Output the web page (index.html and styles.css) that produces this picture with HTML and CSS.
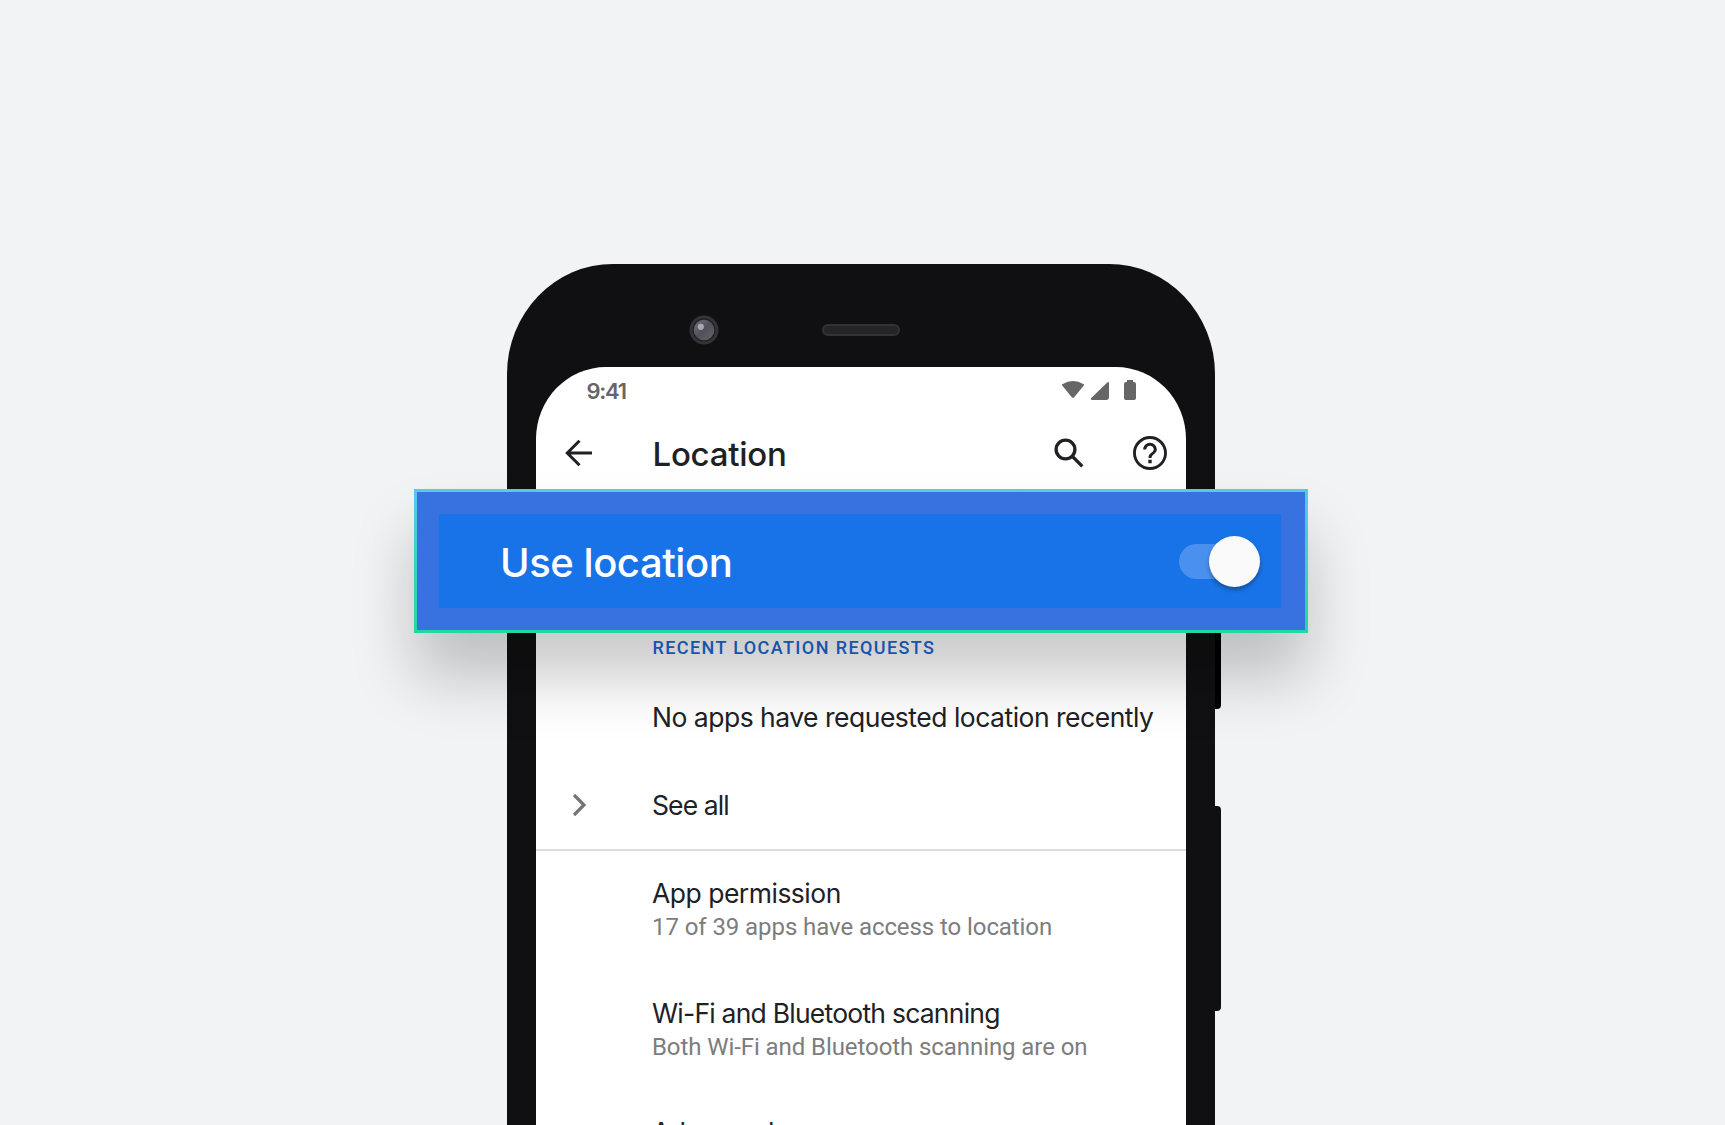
FILE: index.html
```html
<!DOCTYPE html>
<html lang="en">
<head>
<meta charset="utf-8">
<title>Location</title>
<link rel="stylesheet" href="styles.css">
</head>
<body>
<main class="stage">
  <section class="phone">
    <span class="side-button side-button-power"></span>
    <span class="side-button side-button-volume"></span>
    <div class="bezel">
      <svg class="camera" width="30" height="30" viewBox="0 0 30 30">
        <defs><linearGradient id="lens" x1="0" y1="0" x2="1" y2="1"><stop offset="0" stop-color="#77757d"/><stop offset=".5" stop-color="#50505c"/><stop offset="1" stop-color="#66656b"/></linearGradient></defs>
        <circle cx="15" cy="15" r="14.5" fill="#343437"/>
        <circle cx="15" cy="15" r="11.5" fill="#202024"/>
        <circle cx="15" cy="15" r="10.3" fill="url(#lens)"/>
        <circle cx="11.8" cy="11.8" r="3.1" fill="#aaa9af"/>
      </svg>
      <span class="speaker"></span>
    </div>
    <div class="screen">
      <div class="status-bar">
        <span class="clock">9:41</span>
        <svg class="status-icons" width="76" height="22" viewBox="0 0 76 22" fill="#666">
          <path d="M1.3 4.2Q12 -2.2 22.7 4.2Q23.4 4.8 22.8 5.6L13.2 17.2Q12 18.5 10.8 17.2L1.2 5.6Q.6 4.8 1.3 4.2Z"/>
          <path d="M48 2.8V17Q48 20 45 20H31Q29 19.500 30.500 17.800L46.500 2.300Q47.800 1.300 48 2.800Z"/>
          <path d="M66 0H72V2H73Q75 2 75 4V18Q75 20 73 20H65Q63 20 63 18V4Q63 2 65 2H66Z"/>
        </svg>
      </div>
      <header class="app-bar">
        <svg class="back" width="28" height="28" viewBox="0 0 28 28" fill="none" stroke="#202124" stroke-width="3"><path d="M27 14H3M14.500 1.800L2.300 14L14.500 26.200"/></svg>
        <h1 class="title">Location</h1>
        <svg class="search" width="32" height="32" viewBox="0 0 32 32" fill="none" stroke="#202124" stroke-width="3.300"><circle cx="12.500" cy="12.500" r="9.400"/><path d="M19 19L29.300 29.300"/></svg>
        <svg class="help" width="34" height="34" viewBox="2 2 20 20" fill="#202124"><path d="M11 18h2v-2h-2v2zm1-16C6.480 2 2 6.480 2 12s4.480 10 10 10 10-4.480 10-10S17.520 2 12 2zm0 18.300c-4.580 0-8.300-3.720-8.300-8.300s3.720-8.300 8.300-8.300 8.300 3.720 8.300 8.300-3.720 8.300-8.300 8.300zm0-14.300c-2.210 0-4 1.790-4 4h1.800c0-1.210.99-2.200 2.200-2.200s2.200.99 2.200 2.200c0 2-3.100 1.750-3.100 5h1.800c0-2.250 3.100-2.500 3.100-5 0-2.210-1.790-4-4-4z"/></svg>
      </header>
      <div class="content">
        <h2 class="section-label">RECENT LOCATION REQUESTS</h2>
        <p class="row row-empty"><span class="row-title t-empty">No apps have requested location recently</span></p>
        <div class="row row-all">
          <svg class="chevron" width="16" height="24" viewBox="0 0 16 24" fill="none" stroke="#757575" stroke-width="3.200"><path d="M2 2L12 12L2 22"/></svg>
          <span class="row-title t-all">See all</span>
        </div>
        <div class="row row-double"><span class="row-title t-app">App permission</span><span class="row-sub">17 of 39 apps have access to location</span></div>
        <div class="row row-double"><span class="row-title t-wifi">Wi-Fi and Bluetooth scanning</span><span class="row-sub">Both Wi-Fi and Bluetooth scanning are on</span></div>
        <div class="row row-double row-last"><span class="row-title t-adv">Advanced</span></div>
      </div>
    </div>
    <div class="callout">
      <div class="callout-inner">
        <span class="callout-label">Use location</span>
        <span class="switch"><span class="thumb"></span></span>
      </div>
    </div>
  </section>
</main>
</body>
</html>
```
FILE: styles.css
```css
* { box-sizing: border-box; }
body { margin: 0; background: #f1f3f5; font-family: Inter, "Liberation Sans", sans-serif; color: #202124; }
h1, h2, p { margin: 0; }
svg { display: block; flex: none; }
.stage { height: 1125px; overflow: hidden; padding: 264px 0 0 507px; }
.phone { position: relative; width: 707.500px; height: 1300px; padding: 0 28.500px 0 29px; background: #101012; border-radius: 106px / 110px; }
.side-button { position: absolute; left: 100%; width: 6.500px; background: #101012; border-radius: 0 4px 4px 0; }
.side-button-power { top: 300px; height: 144.500px; background: #000; }
.side-button-volume { top: 542px; height: 204.500px; }
.bezel { height: 103px; display: flex; align-items: center; padding: 29px 0 0 152.700px; gap: 103.500px; }
.speaker { width: 78px; height: 12px; border-radius: 6px; background: #252527; border: 2px solid #333335; }
.screen { height: 1150px; background: #fff; border-radius: 70px 70px 0 0 / 72px 72px 0 0; overflow: hidden; }
.status-bar { height: 49px; display: flex; justify-content: space-between; align-items: center; padding: 0 49px 0 50.500px; color: #666; }
.clock { margin-top: -1px; font-size: 22px; font-weight: 600; letter-spacing: -1.300px; }
.status-icons { margin-top: -2px; }
.app-bar { height: 74px; display: flex; align-items: center; padding: 0 19px 0 29px; }
.title { flex: 1; margin: 1px 0 0 59.500px; font-size: 33px; line-height: 40px; font-weight: 500; letter-spacing: -.250px; }
.search { margin-top: -1px; }
.help { margin-left: 48.500px; }
.content { padding-top: 147px; }
.section-label { margin-left: 116.500px; font: 500 18px/22px Roboto, sans-serif; letter-spacing: 1.400px; color: #1967d2; white-space: nowrap; }
.row { display: flex; padding-left: 116px; white-space: nowrap; }
.row-title { font-size: 26.500px; line-height: 34px; }
.t-empty, .t-app { letter-spacing: -.500px; }
.t-all { letter-spacing: -.900px; }
.t-wifi { letter-spacing: -.770px; }
.t-adv { letter-spacing: -.600px; }
.row-empty { padding-top: 41px; height: 102.500px; }
.row-all { align-items: center; height: 89px; padding: 0 0 0 35.500px; border-bottom: 2px solid #dadcdc; }
.chevron { margin-right: 64.500px; }
.row-double { flex-direction: column; height: 120px; padding-top: 25.500px; }
.row-last { padding-top: 24.500px; }
.row-sub { font: 24px/34px Roboto, sans-serif; letter-spacing: -.080px; color: #7d7d7d; }
.callout { position: absolute; left: -93px; top: 225px; width: 894px; height: 144px; padding: 22px 24px; border: 3px solid; border-image: linear-gradient(#58c8ec, #20d9a0) 1; background: #3871e0; box-shadow: 0 44px 62px 0 rgba(0,0,0,.21); }
.callout-inner { height: 94px; width: 842px; margin-left: -2px; padding: 0 21px 0 61px; display: flex; align-items: center; justify-content: space-between; background: #1873e8; }
.callout-label { padding-top: 2px; font-size: 40px; font-weight: 500; letter-spacing: -.450px; color: #fff; white-space: nowrap; }
.switch { width: 81px; height: 35px; margin-top: 1px; border-radius: 18px; background: linear-gradient(#4a90ee,#4a90ee) 0 0/62px 35px no-repeat; display: flex; align-items: center; justify-content: flex-end; }
.thumb { width: 51px; height: 51px; flex: none; border-radius: 50%; background: #fafafa; box-shadow: 0 3px 4px rgba(0,0,0,.3); }
```
